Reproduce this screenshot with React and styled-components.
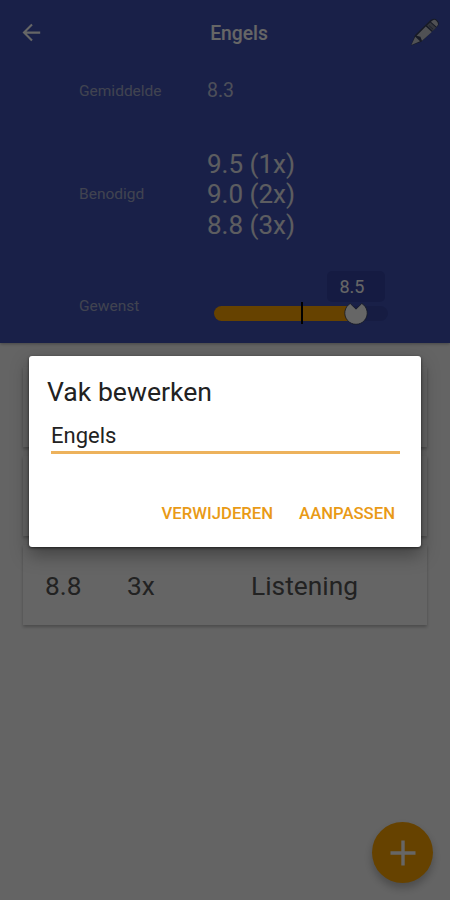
import React, { useState } from "react";
import styled, { createGlobalStyle } from "styled-components";

const needed = ["9.5 (1x)", "9.0 (2x)", "8.8 (3x)"];

const grades = [
  { id: 1, grade: "", weight: "", name: "" },
  { id: 2, grade: "", weight: "", name: "" },
  { id: 3, grade: "8.8", weight: "3x", name: "Listening" },
];

const BackIcon = () => (
  <svg width='20' height='20' viewBox='0 0 20 20' fill='none'>
    <path d='M18.2 9.6H2.2M10 1.6L2 9.6L10 17.6' stroke='#fff' strokeWidth='2.1' />
  </svg>
);

const PencilIcon = () => (
  <svg width='30' height='30' viewBox='0 0 30 30'>
    <path d='M1 27.5L5 17L20.5 2Q24.5 -0.5 27 2L28.4 3.8Q29.5 6 27.8 8L11.4 23.8Z' fill='#3a435f' />
    <path d='M1.4 27L5.2 18.8L10 23.2Z' fill='#c8cad2' />
    <path d='M6.6 17.8L15.8 8.4L21.8 14L12 22.8L10.4 18.8Z' fill='#c8cad2' />
    <path d='M17 7.6L20.3 4.4L26.1 9.8L22.8 12.9Z' fill='#858b9b' />
    <path d='M21.3 3.4Q24.2 0.8 26 2.6L27.6 4.5Q28.8 6.4 27 8.3L26.6 8.8L20.9 3.8Z' fill='#c8cad2' />
    <path d='M18.8 7.4L23.2 11.4' stroke='#3a435f' strokeWidth='0.8' />
  </svg>
);

const PlusIcon = () => (
  <svg width='26' height='26' viewBox='0 0 26 26'>
    <path d='M13 0.5V25.5M0.5 13H25.5' stroke='#fff' strokeWidth='3.4' />
  </svg>
);

const ThumbIcon = () => (
  <svg width='24' height='24' viewBox='0 0 24 24'>
    <path
      d='M6.2 2.5L12 8.2L17.8 2.5A11.2 11.2 0 1 1 6.2 2.5Z'
      fill='#fff'
      stroke='#2e3856'
      strokeWidth='0.8'
    />
  </svg>
);

const App = () => {
  const [subject, setSubject] = useState("Engels");

  return (
    <Screen>
      <GlobalStyle />
      <Header>
        <Toolbar>
          <IconButton aria-label='Terug'>
            <BackIcon />
          </IconButton>
          <Title>Engels</Title>
          <IconButton aria-label='Bewerken'>
            <PencilIcon />
          </IconButton>
        </Toolbar>
        <Row $height={49}>
          <Label>Gemiddelde</Label>
          <Average>8.3</Average>
        </Row>
        <Row $height={158}>
          <Label>Benodigd</Label>
          <Needed>
            {needed.map((n) => (
              <li key={n}>{n}</li>
            ))}
          </Needed>
        </Row>
        <Row $height={66}>
          <Label>Gewenst</Label>
          <Slider>
            <Bubble>8.5</Bubble>
            <Track>
              <Fill />
              <Tick />
              <Thumb>
                <ThumbIcon />
              </Thumb>
            </Track>
          </Slider>
        </Row>
      </Header>

      <List>
        {grades.map((g) => (
          <Card key={g.id}>
            <span>{g.grade}</span>
            <span>{g.weight}</span>
            <CardName>{g.name}</CardName>
          </Card>
        ))}
      </List>

      <Fab aria-label='Toevoegen'>
        <PlusIcon />
      </Fab>

      {/* edit dialog */}
      <Scrim>
        <Dialog>
          <h2>Vak bewerken</h2>
          <Input
            type='text'
            value={subject}
            onChange={(e) => setSubject(e.target.value)}
          />
          <Actions>
            <button type='button'>VERWIJDEREN</button>
            <button type='button'>AANPASSEN</button>
          </Actions>
        </Dialog>
      </Scrim>
    </Screen>
  );
};

const GlobalStyle = createGlobalStyle`
  * {
    box-sizing: border-box;
  }
  body {
    margin: 0;
    font-family: Roboto, "Liberation Sans", sans-serif;
  }
  button {
    border: none;
    background: transparent;
    padding: 0;
    font-family: inherit;
    cursor: pointer;
  }
  svg {
    display: block;
  }
`;

const Screen = styled.main`
  position: relative;
  height: 900px;
  overflow: hidden;
  background: #fafafa;
`;

const Header = styled.header`
  height: 343px;
  background: #3f51b5;
  box-shadow: 0 1px 3px rgba(0, 0, 0, 0.3);
`;

const Toolbar = styled.div`
  display: grid;
  grid-template-columns: 20px 1fr 30px;
  align-items: center;
  height: 66px;
  padding: 0 10px 0 22px;
`;

const IconButton = styled.button`
  display: flex;
  justify-content: center;
  color: #fff;
`;

const Title = styled.h1`
  margin: 0;
  padding: 1px 0 0 26px;
  color: #fff;
  font-size: 19.3px;
  font-weight: 500;
  text-align: center;
`;

const Row = styled.div`
  display: grid;
  grid-template-columns: 128px 1fr;
  align-items: center;
  height: ${(props) => props.$height}px;
  padding-left: 79px;
`;

const Label = styled.span`
  color: #a2a9c8;
  font-size: 15.5px;
`;

const Average = styled.span`
  color: #c0c5df;
  font-size: 19.5px;
`;

const Needed = styled.ul`
  margin: 0;
  padding: 1px 0 0;
  list-style: none;
  color: #e8e9f0;
  font-size: 26px;
  line-height: 30.5px;
`;

const Slider = styled.div`
  display: flex;
  flex-direction: column;
  width: 174px;
  margin: -2px 0 0 7px;
`;

const Bubble = styled.span`
  align-self: flex-end;
  width: 58px;
  height: 31px;
  margin-right: 3px;
  padding-right: 8px;
  border-radius: 5px;
  background: #3545a5;
  color: #fff;
  font-size: 18px;
  line-height: 32px;
  text-align: center;
`;

const Track = styled.div`
  position: relative;
  height: 15px;
  margin: 4px 0 18px;
  border-radius: 8px;
  background: #3747a6;
`;

const Fill = styled.div`
  width: 142px;
  height: 100%;
  border-radius: 8px;
  background: #ffa500;
`;

const Tick = styled.div`
  position: absolute;
  top: -4px;
  left: 87px;
  width: 2px;
  height: 22px;
  background: #000;
`;

const Thumb = styled.div`
  position: absolute;
  top: -5px;
  left: 130px;
`;

const List = styled.section`
  display: flex;
  flex-direction: column;
  gap: 9px;
  padding: 24px 23px;
`;

const Card = styled.article`
  display: grid;
  grid-template-columns: 82px 72px 1fr;
  align-items: center;
  height: 80px;
  padding: 1px 17px 0 22px;
  background: #fcfcfc;
  box-shadow: 0 2px 3px rgba(0, 0, 0, 0.25);
  color: #555;
  font-size: 26.3px;
`;

const CardName = styled.span`
  text-align: center;
`;

const Fab = styled.button`
  position: absolute;
  right: 17px;
  bottom: 17px;
  display: flex;
  align-items: center;
  justify-content: center;
  width: 61px;
  height: 61px;
  border-radius: 50%;
  background: #ffa500;
  box-shadow: 0 5px 8px rgba(0, 0, 0, 0.25);
`;

const Scrim = styled.div`
  position: absolute;
  inset: 0;
  display: flex;
  align-items: center;
  justify-content: center;
  background: rgba(0, 0, 0, 0.6);
`;

const Dialog = styled.form`
  width: 392px;
  height: 191px;
  padding: 18px;
  border-radius: 3px;
  background: #fff;
  box-shadow: 0 8px 18px rgba(0, 0, 0, 0.35), 0 1px 3px rgba(0, 0, 0, 0.6);
  margin: 3px 0 0;

  h2 {
    margin: 0;
    color: #222;
    font-size: 26.6px;
    font-weight: 400;
    line-height: 36px;
  }
`;

const Input = styled.input`
  display: block;
  width: 349px;
  height: 44px;
  margin-left: 4px;
  padding: 9px 0 0;
  border: none;
  border-bottom: 3px solid #edb25c;
  outline: none;
  background: transparent;
  color: #222;
  font-family: inherit;
  font-size: 22px;
`;

const Actions = styled.div`
  display: flex;
  justify-content: flex-end;
  gap: 26px;
  margin-top: 49px;
  padding-right: 8px;

  button {
    color: #e99a16;
    font-size: 16.7px;
    font-weight: 500;
    line-height: 22px;
  }
`;

export default App;
